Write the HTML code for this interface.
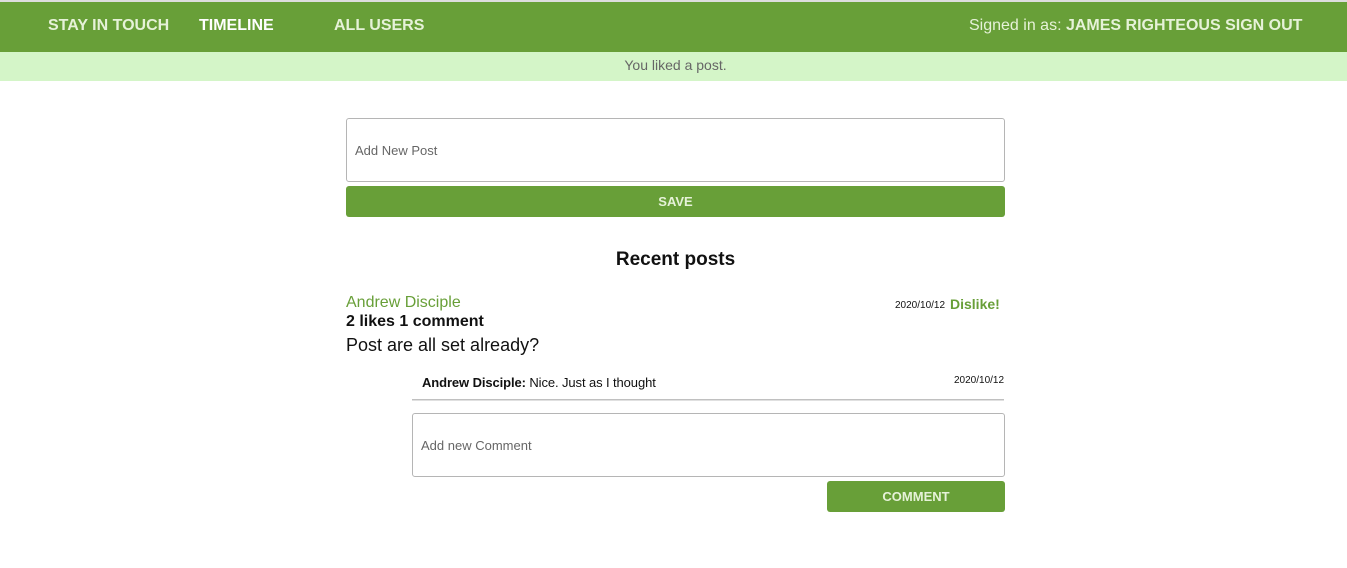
<!DOCTYPE html>
<html><head><style>
*{margin:0;padding:0;box-sizing:border-box}
body{width:1347px;height:568px;background:#fff;font-family:"Liberation Sans",sans-serif;position:relative;overflow:hidden}
.a{position:absolute;white-space:nowrap}
.nav{position:absolute;left:0;top:2px;width:1347px;height:50px;background:#689f38}
.top{position:absolute;left:0;top:0;width:1347px;height:2px;background:#ddd}
.nl{font-size:16px;font-weight:bold;color:#e6f2d8;top:17px}
.box{position:absolute;border:1px solid #b5b5b5;border-radius:3px;background:#fff}
.btn{position:absolute;background:#689f38;border-radius:3px;color:#e6f2d8;font-weight:bold;font-size:13px;text-align:center}
</style></head><body>
<div class="top"></div>
<div class="nav"></div>
<div class="a nl" style="left:48px">STAY IN TOUCH</div>
<div class="a nl" style="left:199px;color:#fff">TIMELINE</div>
<div class="a nl" style="left:334px">ALL USERS</div>
<div class="a nl" style="left:969px;font-weight:normal">Signed in as: <b>JAMES RIGHTEOUS SIGN OUT</b></div>
<div class="a" style="left:0;top:52px;width:1347px;height:29px;background:#d4f5c8"></div>
<div class="a" style="left:0;top:57px;width:1351px;text-align:center;font-size:14px;color:#666">You liked a post.</div>
<div class="box" style="left:346px;top:118px;width:659px;height:64px"></div>
<div class="a" style="left:355px;top:143px;font-size:13px;color:#666">Add New Post</div>
<div class="btn" style="left:346px;top:186px;width:659px;height:31px;line-height:31px">SAVE</div>
<div class="a" style="left:346px;top:249px;width:659px;text-align:center;font-size:19px;font-weight:bold;color:#111">Recent posts</div>
<div class="a" style="left:346px;top:294px;font-size:16px;color:#689f38">Andrew Disciple</div>
<div class="a" style="left:895px;top:300px;font-size:10px;color:#111">2020/10/12</div>
<div class="a" style="left:950px;top:296px;font-size:14px;font-weight:bold;color:#689f38">Dislike!</div>
<div class="a" style="left:346px;top:313px;font-size:16px;font-weight:bold;color:#111">2 likes 1 comment</div>
<div class="a" style="left:346px;top:335px;font-size:18px;color:#111">Post are all set already?</div>
<div class="a" style="left:422px;top:375px;font-size:13px;color:#111;letter-spacing:-0.1px"><b>Andrew Disciple:</b> Nice. Just as I thought</div>
<div class="a" style="left:954px;top:375px;font-size:10px;color:#111">2020/10/12</div>
<div class="a" style="left:412px;top:399px;width:592px;height:1px;background:#c0c0c0"></div>
<div class="a" style="left:412px;top:400px;width:592px;height:1px;background:#e0e0e0"></div>
<div class="box" style="left:412px;top:413px;width:593px;height:64px"></div>
<div class="a" style="left:421px;top:438px;font-size:13px;color:#666">Add new Comment</div>
<div class="btn" style="left:827px;top:481px;width:178px;height:31px;line-height:31px">COMMENT</div>
</body></html>
